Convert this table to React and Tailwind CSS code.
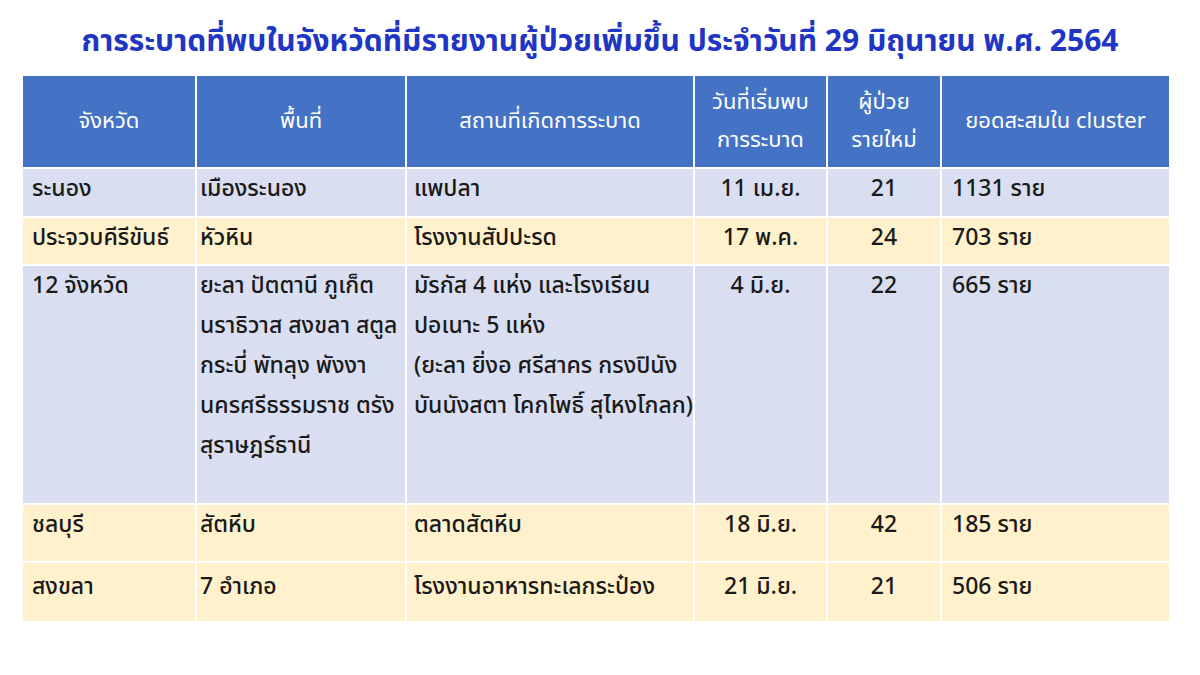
import React from "react";

const rows = [
  {
    bg: "bg-[#d9dff1]",
    h: "h-[47px]",
    a: "ระนอง",
    b: "เมืองระนอง",
    c: "แพปลา",
    d: "11 เม.ย.",
    e: "21",
    f: "1131 ราย",
    pt: "pt-0",
  },
  {
    bg: "bg-[#fff1cc]",
    h: "h-[46px]",
    a: "ประจวบคีรีขันธ์",
    b: "หัวหิน",
    c: "โรงงานสัปปะรด",
    d: "17 พ.ค.",
    e: "24",
    f: "703 ราย",
    pt: "pt-0",
  },
  {
    bg: "bg-[#d9dff1]",
    h: "h-[237px]",
    a: "12 จังหวัด",
    b: "ยะลา ปัตตานี ภูเก็ต\nนราธิวาส สงขลา สตูล\nกระบี่ พัทลุง พังงา\nนครศรีธรรมราช ตรัง\nสุราษฎร์ธานี",
    c: "มัรกัส 4 แห่ง และโรงเรียน\nปอเนาะ 5 แห่ง\n(ยะลา ยิ่งอ ศรีสาคร กรงปินัง\nบันนังสตา โคกโพธิ์ สุไหงโกลก)",
    d: "4 มิ.ย.",
    e: "22",
    f: "665 ราย",
    pt: "pt-0",
  },
  {
    bg: "bg-[#fff1cc]",
    h: "h-[56px]",
    a: "ชลบุรี",
    b: "สัตหีบ",
    c: "ตลาดสัตหีบ",
    d: "18 มิ.ย.",
    e: "42",
    f: "185 ราย",
    pt: "pt-0",
  },
  {
    bg: "bg-[#fff1cc]",
    h: "h-[58px]",
    a: "สงขลา",
    b: "7 อำเภอ",
    c: "โรงงานอาหารทะเลกระป๋อง",
    d: "21 มิ.ย.",
    e: "21",
    f: "506 ราย",
    pt: "pt-[4px]",
  },
];

const font = { fontFamily: '"Tahoma", "Noto Sans Thai", "Noto Sans", "DejaVu Sans", sans-serif' };

export default function App() {
  return (
    <div
      className="w-[1200px] h-[675px] bg-white overflow-hidden text-[#1a1a1a]"
      style={font}
    >
      <h1 className="h-[76px] pt-[20px] text-center text-[30px] leading-[44px] font-bold text-[#1f36c4] whitespace-nowrap">
        การระบาดที่พบในจังหวัดที่มีรายงานผู้ป่วยเพิ่มขึ้น ประจำวันที่ 29 มิถุนายน พ.ศ. 2564
      </h1>
      <div className="ml-[23px] w-[1146px] grid grid-cols-[172px_208px_286px_131px_112px_227px] gap-x-[2px] gap-y-[2px] bg-white">
        {[
          ["จังหวัด"],
          ["พื้นที่"],
          ["สถานที่เกิดการระบาด"],
          ["วันที่เริ่มพบ", "การระบาด"],
          ["ผู้ป่วย", "รายใหม่"],
          ["ยอดสะสมใน cluster"],
        ].map((lines, i) => (
          <div
            key={i}
            className="h-[91px] bg-[#4472c4] text-white flex flex-col items-center justify-center text-[22px] leading-[38px] whitespace-nowrap"
          >
            {lines.map((l, j) => (
              <span key={j}>{l}</span>
            ))}
          </div>
        ))}
        {rows.map((r, i) => (
          <React.Fragment key={i}>
            <div className={`${r.bg} ${r.h} ${r.pt} pl-[9px] text-[23px] leading-[40px] font-medium whitespace-pre-line`}>{r.a}</div>
            <div className={`${r.bg} ${r.h} ${r.pt} pl-[3px] text-[23px] leading-[40px] font-medium whitespace-pre line-clamp-none`}>{r.b}</div>
            <div className={`${r.bg} ${r.h} ${r.pt} pl-[7px] text-[23px] leading-[40px] font-medium whitespace-pre`}>{r.c}</div>
            <div className={`${r.bg} ${r.h} ${r.pt} text-center text-[23px] leading-[40px] font-medium whitespace-nowrap`}>{r.d}</div>
            <div className={`${r.bg} ${r.h} ${r.pt} text-center text-[23px] leading-[40px] font-medium`}>{r.e}</div>
            <div className={`${r.bg} ${r.h} ${r.pt} pl-[10px] text-[23px] leading-[40px] font-medium whitespace-nowrap`}>{r.f}</div>
          </React.Fragment>
        ))}
      </div>
    </div>
  );
}
